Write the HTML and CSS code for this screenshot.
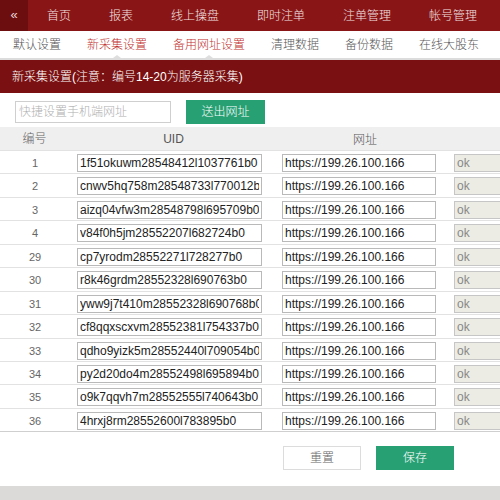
FILE: index.html
```html
<!DOCTYPE html>
<html>
<head>
<meta charset="utf-8">
<link rel="stylesheet" href="styles.css">
</head>
<body>
<div class="page">
  <div class="topnav">
    <div class="back">«</div>
    <div class="nav-item">首页</div>
    <div class="nav-item">报表</div>
    <div class="nav-item">线上操盘</div>
    <div class="nav-item">即时注单</div>
    <div class="nav-item">注单管理</div>
    <div class="nav-item">帐号管理</div>
  </div>
  <div class="subnav">
    <div class="sub-item">默认设置</div>
    <div class="sub-item active">新采集设置</div>
    <div class="sub-item active">备用网址设置</div>
    <div class="sub-item">清理数据</div>
    <div class="sub-item">备份数据</div>
    <div class="sub-item">在线大股东</div>
  </div>
  <div class="title">新采集设置(注意：编号14-20为服务器采集)</div>
  <div class="toolbar">
    <input class="quick" type="text" placeholder="快捷设置手机端网址">
    <div class="btn green send">送出网址</div>
  </div>
  <div class="table">
    <div class="row head">
      <div class="c1">编号</div>
      <div class="c2">UID</div>
      <div class="c3">网址</div>
      <div class="c4"></div>
    </div>
    <div class="row"><div class="c1">1</div><div class="c2"><input class="uid" value="1f51okuwm28548412l1037761b0"></div><div class="c3"><input class="url" value="https://199.26.100.166"></div><div class="c4"><input class="ok" value="ok"></div></div>
    <div class="row"><div class="c1">2</div><div class="c2"><input class="uid" value="cnwv5hq758m28548733l770012b0"></div><div class="c3"><input class="url" value="https://199.26.100.166"></div><div class="c4"><input class="ok" value="ok"></div></div>
    <div class="row"><div class="c1">3</div><div class="c2"><input class="uid" value="aizq04vfw3m28548798l695709b0"></div><div class="c3"><input class="url" value="https://199.26.100.166"></div><div class="c4"><input class="ok" value="ok"></div></div>
    <div class="row"><div class="c1">4</div><div class="c2"><input class="uid" value="v84f0h5jm28552207l682724b0"></div><div class="c3"><input class="url" value="https://199.26.100.166"></div><div class="c4"><input class="ok" value="ok"></div></div>
    <div class="row"><div class="c1">29</div><div class="c2"><input class="uid" value="cp7yrodm28552271l728277b0"></div><div class="c3"><input class="url" value="https://199.26.100.166"></div><div class="c4"><input class="ok" value="ok"></div></div>
    <div class="row"><div class="c1">30</div><div class="c2"><input class="uid" value="r8k46grdm28552328l690763b0"></div><div class="c3"><input class="url" value="https://199.26.100.166"></div><div class="c4"><input class="ok" value="ok"></div></div>
    <div class="row"><div class="c1">31</div><div class="c2"><input class="uid" value="yww9j7t410m28552328l690768b0"></div><div class="c3"><input class="url" value="https://199.26.100.166"></div><div class="c4"><input class="ok" value="ok"></div></div>
    <div class="row"><div class="c1">32</div><div class="c2"><input class="uid" value="cf8qqxscxvm28552381l754337b0"></div><div class="c3"><input class="url" value="https://199.26.100.166"></div><div class="c4"><input class="ok" value="ok"></div></div>
    <div class="row"><div class="c1">33</div><div class="c2"><input class="uid" value="qdho9yizk5m28552440l709054b0"></div><div class="c3"><input class="url" value="https://199.26.100.166"></div><div class="c4"><input class="ok" value="ok"></div></div>
    <div class="row"><div class="c1">34</div><div class="c2"><input class="uid" value="py2d20do4m28552498l695894b0"></div><div class="c3"><input class="url" value="https://199.26.100.166"></div><div class="c4"><input class="ok" value="ok"></div></div>
    <div class="row"><div class="c1">35</div><div class="c2"><input class="uid" value="o9k7qqvh7m28552555l740643b0"></div><div class="c3"><input class="url" value="https://199.26.100.166"></div><div class="c4"><input class="ok" value="ok"></div></div>
    <div class="row last"><div class="c1">36</div><div class="c2"><input class="uid" value="4hrxj8rm28552600l783895b0"></div><div class="c3"><input class="url" value="https://199.26.100.166"></div><div class="c4"><input class="ok" value="ok"></div></div>
  </div>
  <div class="actions">
    <div class="btn reset">重置</div>
    <div class="btn green save">保存</div>
  </div>
  <div class="footer"></div>
</div>
</body>
</html>
```

FILE: styles.css
```css
* { box-sizing: border-box; }
html, body { margin: 0; padding: 0; }
body {
  width: 500px;
  height: 500px;
  overflow: hidden;
  background: #fff;
  font-family: "Liberation Sans", "Noto Sans CJK SC", sans-serif;
  font-size: 12px;
  font-weight: 300;
}
.page { width: 500px; display: flex; flex-direction: column; }

.topnav {
  height: 31px;
  background: #8a1516;
  display: flex;
  align-items: stretch;
  color: #f3e4e4;
  white-space: nowrap;
}
.back {
  width: 28px;
  background: #6c0e0f;
  display: flex;
  align-items: center;
  justify-content: center;
  font-size: 13px;
  color: #e9d7d7;
  line-height: 1;
  padding-bottom: 2px;
}
.nav-item {
  padding: 0 19px;
  display: flex;
  align-items: center;
  line-height: 1;
}

.subnav {
  height: 29px;
  border-bottom: 2px solid #dcdcdc;
  display: flex;
  white-space: nowrap;
  color: #555;
}
.sub-item {
  padding: 0 13px;
  display: flex;
  align-items: center;
  line-height: 1;
  position: relative;
}
.sub-item.active { color: #c0302e; }
.sub-item.active::after {
  content: "";
  position: absolute;
  left: 50%;
  bottom: 0;
  margin-left: -4px;
  border-left: 4px solid transparent;
  border-right: 4px solid transparent;
  border-bottom: 3px solid #dedede;
}

.title {
  height: 33px;
  background: #7a1011;
  color: #fff;
  font-size: 12px;
  display: flex;
  align-items: center;
  padding-left: 12px;
  line-height: 1;
  white-space: nowrap;
}

.toolbar {
  height: 34px;
  display: flex;
  align-items: flex-start;
  padding: 7px 0 0 15px;
  gap: 15px;
}
.quick {
  width: 156px;
  height: 22px;
  margin-top: 1px;
  border: 1px solid #cfcfcf;
  padding: 0 3px;
  font-family: "Liberation Sans", "Noto Sans CJK SC", sans-serif;
  font-size: 12px;
  font-weight: 300;
  outline: none;
}
.quick::placeholder { color: #b0b0b0; }
.btn {
  width: 79px;
  height: 24px;
  display: flex;
  align-items: center;
  justify-content: center;
  line-height: 1;
}
.green { background: #27a073; color: #fff; }

.table { border-bottom: 1px solid #cfcfcf; }
.row {
  height: 23.45px;
  display: grid;
  grid-template-columns: 70px 200px 178px 52px;
  border-top: 1px solid #e2e2e2;
  align-items: start;
  padding-top: 3px;
  white-space: nowrap;
  overflow: hidden;
}
.row.head {
  height: 23px;
  background: #efefef;
  border-top: none;
  padding-top: 0;
  align-items: center;
  color: #555;
}
.row.head > div { text-align: center; }
.row.head .c1 { padding-right: 1px; }
.c1 {
  text-align: center;
  color: #666;
  font-size: 11px;
  line-height: 18px;
}
.row.head .c1 { font-size: 12px; }
.c2 { padding-left: 7px; }
.c3 { padding-left: 12px; }
.c4 { padding-left: 6px; }
input.uid, input.url, input.ok {
  height: 18px;
  border: 1px solid #b9b9b9;
  padding: 0 2px;
  margin: 0;
  font-family: "Liberation Sans", sans-serif;
  font-size: 12px;
  color: #222;
  background: #fff;
  outline: none;
  display: block;
}
input.uid { width: 185px; }
input.url { width: 154px; }
input.ok { width: 60px; background: #ececE4; color: #888; border-color: #c6c6c6; }

.actions {
  height: 54px;
  display: flex;
  align-items: flex-start;
  padding: 14px 0 0 283px;
  gap: 15px;
}
.reset {
  width: 78px;
  border: 1px solid #dcdcdc;
  color: #666;
  background: #fff;
}
.save { width: 78px; }

.footer {
  height: 20px;
  background: #dcdad8;
}
```
